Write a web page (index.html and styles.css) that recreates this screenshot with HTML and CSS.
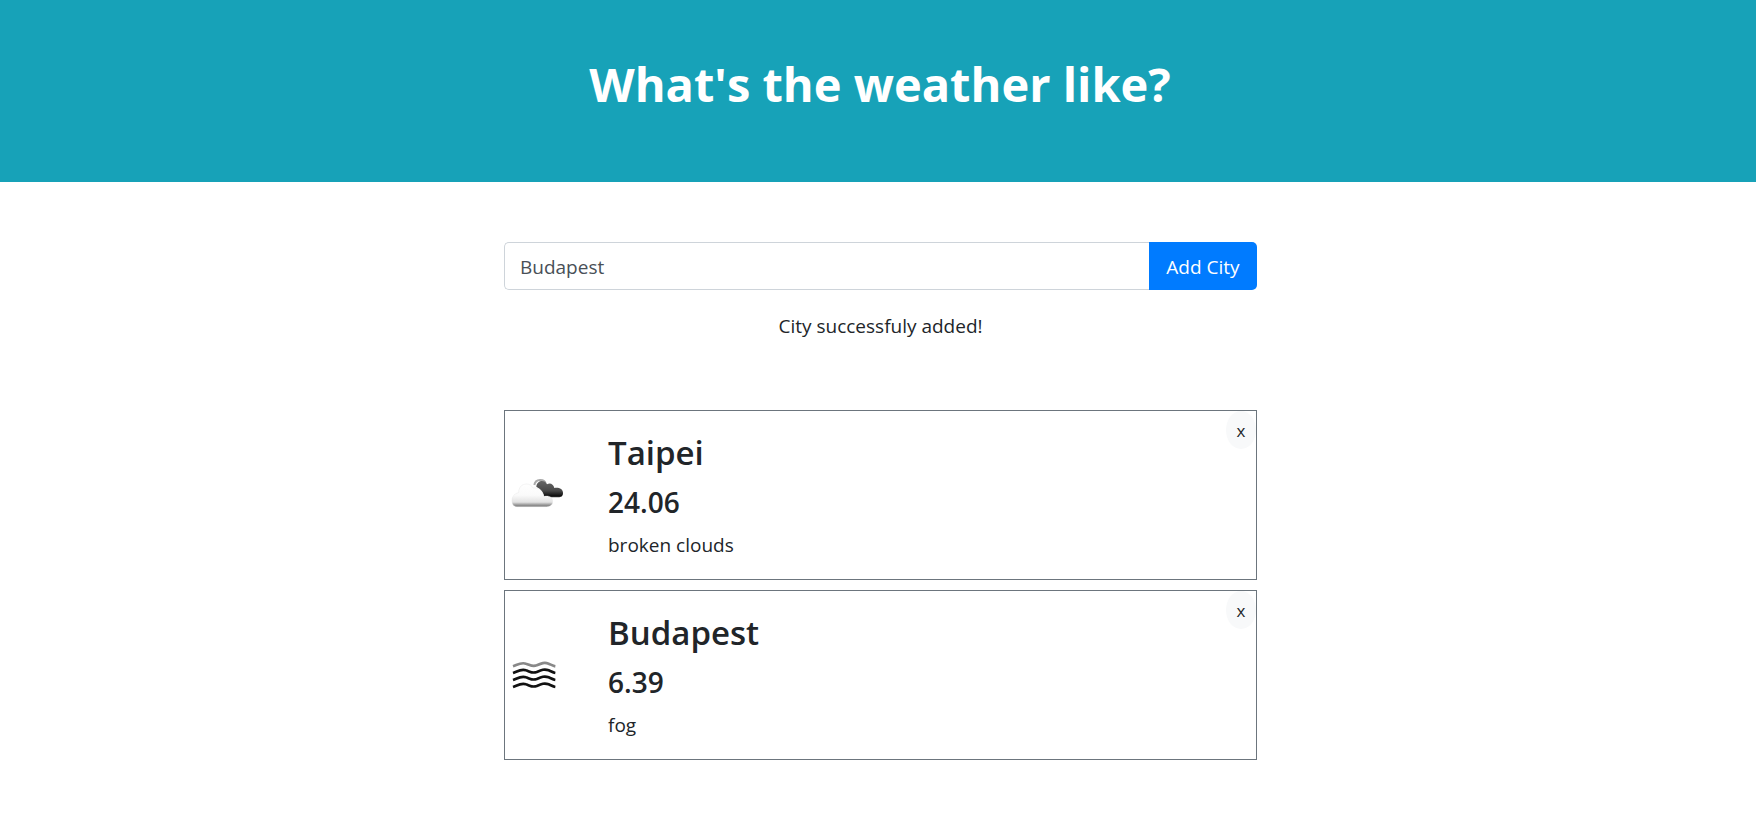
FILE: index.html
```html
<!DOCTYPE html>
<html lang="en">
<head>
  <meta charset="utf-8">
  <meta name="viewport" content="width=device-width, initial-scale=1">
  <title>What's the weather like?</title>
  <link rel="stylesheet" href="styles.css">
</head>
<body>
  <header class="hero">
    <h1 class="hero-title">What's the weather like?</h1>
  </header>
  <main class="content">
    <form class="city-form">
      <input class="city-input" type="text" value="Budapest" aria-label="City">
      <button class="add-button" type="button">Add City</button>
    </form>
    <p class="message">City successfuly added!</p>
    <section class="cards">
      <article class="card">
        <svg class="card-icon" viewBox="0 0 180 180" aria-hidden="true">
          <defs>
            <linearGradient id="light" x1="0" y1="0" x2="0" y2="1">
              <stop offset="0" stop-color="#fff"/>
              <stop offset=".5" stop-color="#fafafa"/>
              <stop offset=".8" stop-color="#e2e2e2"/>
              <stop offset=".92" stop-color="#999"/>
              <stop offset="1" stop-color="#777"/>
            </linearGradient>
            <linearGradient id="dark" x1="0" y1="0" x2="0" y2="1">
              <stop offset="0" stop-color="#666"/>
              <stop offset=".6" stop-color="#484848"/>
              <stop offset=".9" stop-color="#111"/>
              <stop offset="1" stop-color="#333"/>
            </linearGradient>
          </defs>
          <path d="M82 57C85 37 113 38 116 53" fill="none" stroke="#aaa" stroke-width="6"/>
          <path d="M88 62C89 42 114 39 120 55C129 49 139 54 142 66C156 64 168 69 168 81C168 91 162 94 154 94H112Q109 72 88 62Z" fill="url(#dark)"/>
          <path d="M31 122C20 122 15 115 15 104C15 91 23 82 35 80C35 64 44 54 59 54C68 54 74 59 78 66C92 64 107 71 110 91C126 87 137 94 137 106C137 117 130 122 119 122Z" fill="url(#light)" stroke="#ddd" stroke-width="1"/>
        </svg>
        <div class="card-text">
          <h2 class="city-name">Taipei</h2>
          <h3 class="temperature">24.06</h3>
          <p class="description">broken clouds</p>
        </div>
        <button class="remove-button" type="button" aria-label="Remove Taipei">x</button>
      </article>
      <article class="card">
        <svg class="card-icon" viewBox="0 0 180 180" aria-hidden="true">
          <g fill="none" stroke="#111" stroke-width="8">
            <path stroke="#888" d="M18 61C32 56 42 48 57 53C70 57 76 63 89 58C103 52 112 48 125 53C134 57 139 60 145 61"/>
            <path d="M18 81C32 76 42 68 57 73C70 77 76 83 89 78C103 72 112 68 125 73C134 77 139 80 145 81"/>
            <path d="M18 102C32 97 42 89 57 94C70 98 76 104 89 99C103 93 112 89 125 94C134 98 139 101 145 102"/>
            <path d="M18 123C32 118 42 110 57 115C70 119 76 125 89 120C103 114 112 110 125 115C134 119 139 122 145 123"/>
          </g>
        </svg>
        <div class="card-text">
          <h2 class="city-name">Budapest</h2>
          <h3 class="temperature">6.39</h3>
          <p class="description">fog</p>
        </div>
        <button class="remove-button" type="button" aria-label="Remove Budapest">x</button>
      </article>
    </section>
  </main>
</body>
</html>
```
FILE: styles.css
```css
* {
  box-sizing: border-box;
}

body {
  margin: 0;
  background: #fff;
  color: #212529;
  font: 19px/30px "Segoe UI", "Open Sans", "Noto Sans", sans-serif;
}

h1, h2, h3, p {
  margin: 0;
}

.hero {
  padding: 54px 16px 68px 20px;
  background: #17a2b8;
  color: #fff;
  text-align: center;
}

.hero-title {
  font-size: 47px;
  font-weight: 700;
  line-height: 60px;
}

.content {
  max-width: 758px;
  margin: 60px auto;
  padding-left: 5px;
}

.city-form {
  display: flex;
}

.city-input {
  flex: 1;
  min-width: 0;
  height: 48px;
  padding: 1px 15px 0;
  border: 1px solid #ced4da;
  border-right: 0;
  border-radius: 5px 0 0 5px;
  background: #fff;
  color: #495057;
  font: inherit;
}

.add-button {
  flex: none;
  width: 108px;
  padding: 2px 0 0;
  border: 0;
  border-radius: 0 5px 5px 0;
  background: #007bff;
  color: #fff;
  font: inherit;
  white-space: nowrap;
}

.message {
  margin: 21px 0 69px;
  text-align: center;
}

.cards {
  display: grid;
  gap: 10px;
}

.card {
  position: relative;
  display: flex;
  align-items: center;
  gap: 41px;
  padding: 21px 2px 19px;
  border: 1px solid #6c757d;
}

.card-icon {
  flex: none;
  width: 60px;
  height: 60px;
}

.city-name {
  margin-bottom: 10px;
  font-size: 33px;
  font-weight: 600;
  line-height: 42px;
}

.temperature {
  margin-bottom: 10px;
  font-size: 28px;
  font-weight: 600;
  line-height: 36px;
}

.remove-button {
  position: absolute;
  top: 0;
  right: 0;
  width: 30px;
  height: 38px;
  padding: 1px 0 0;
  border: 0;
  border-radius: 50%;
  background: #f8f9fa;
  color: #212529;
  font: inherit;
  font-size: 17px;
}
```
